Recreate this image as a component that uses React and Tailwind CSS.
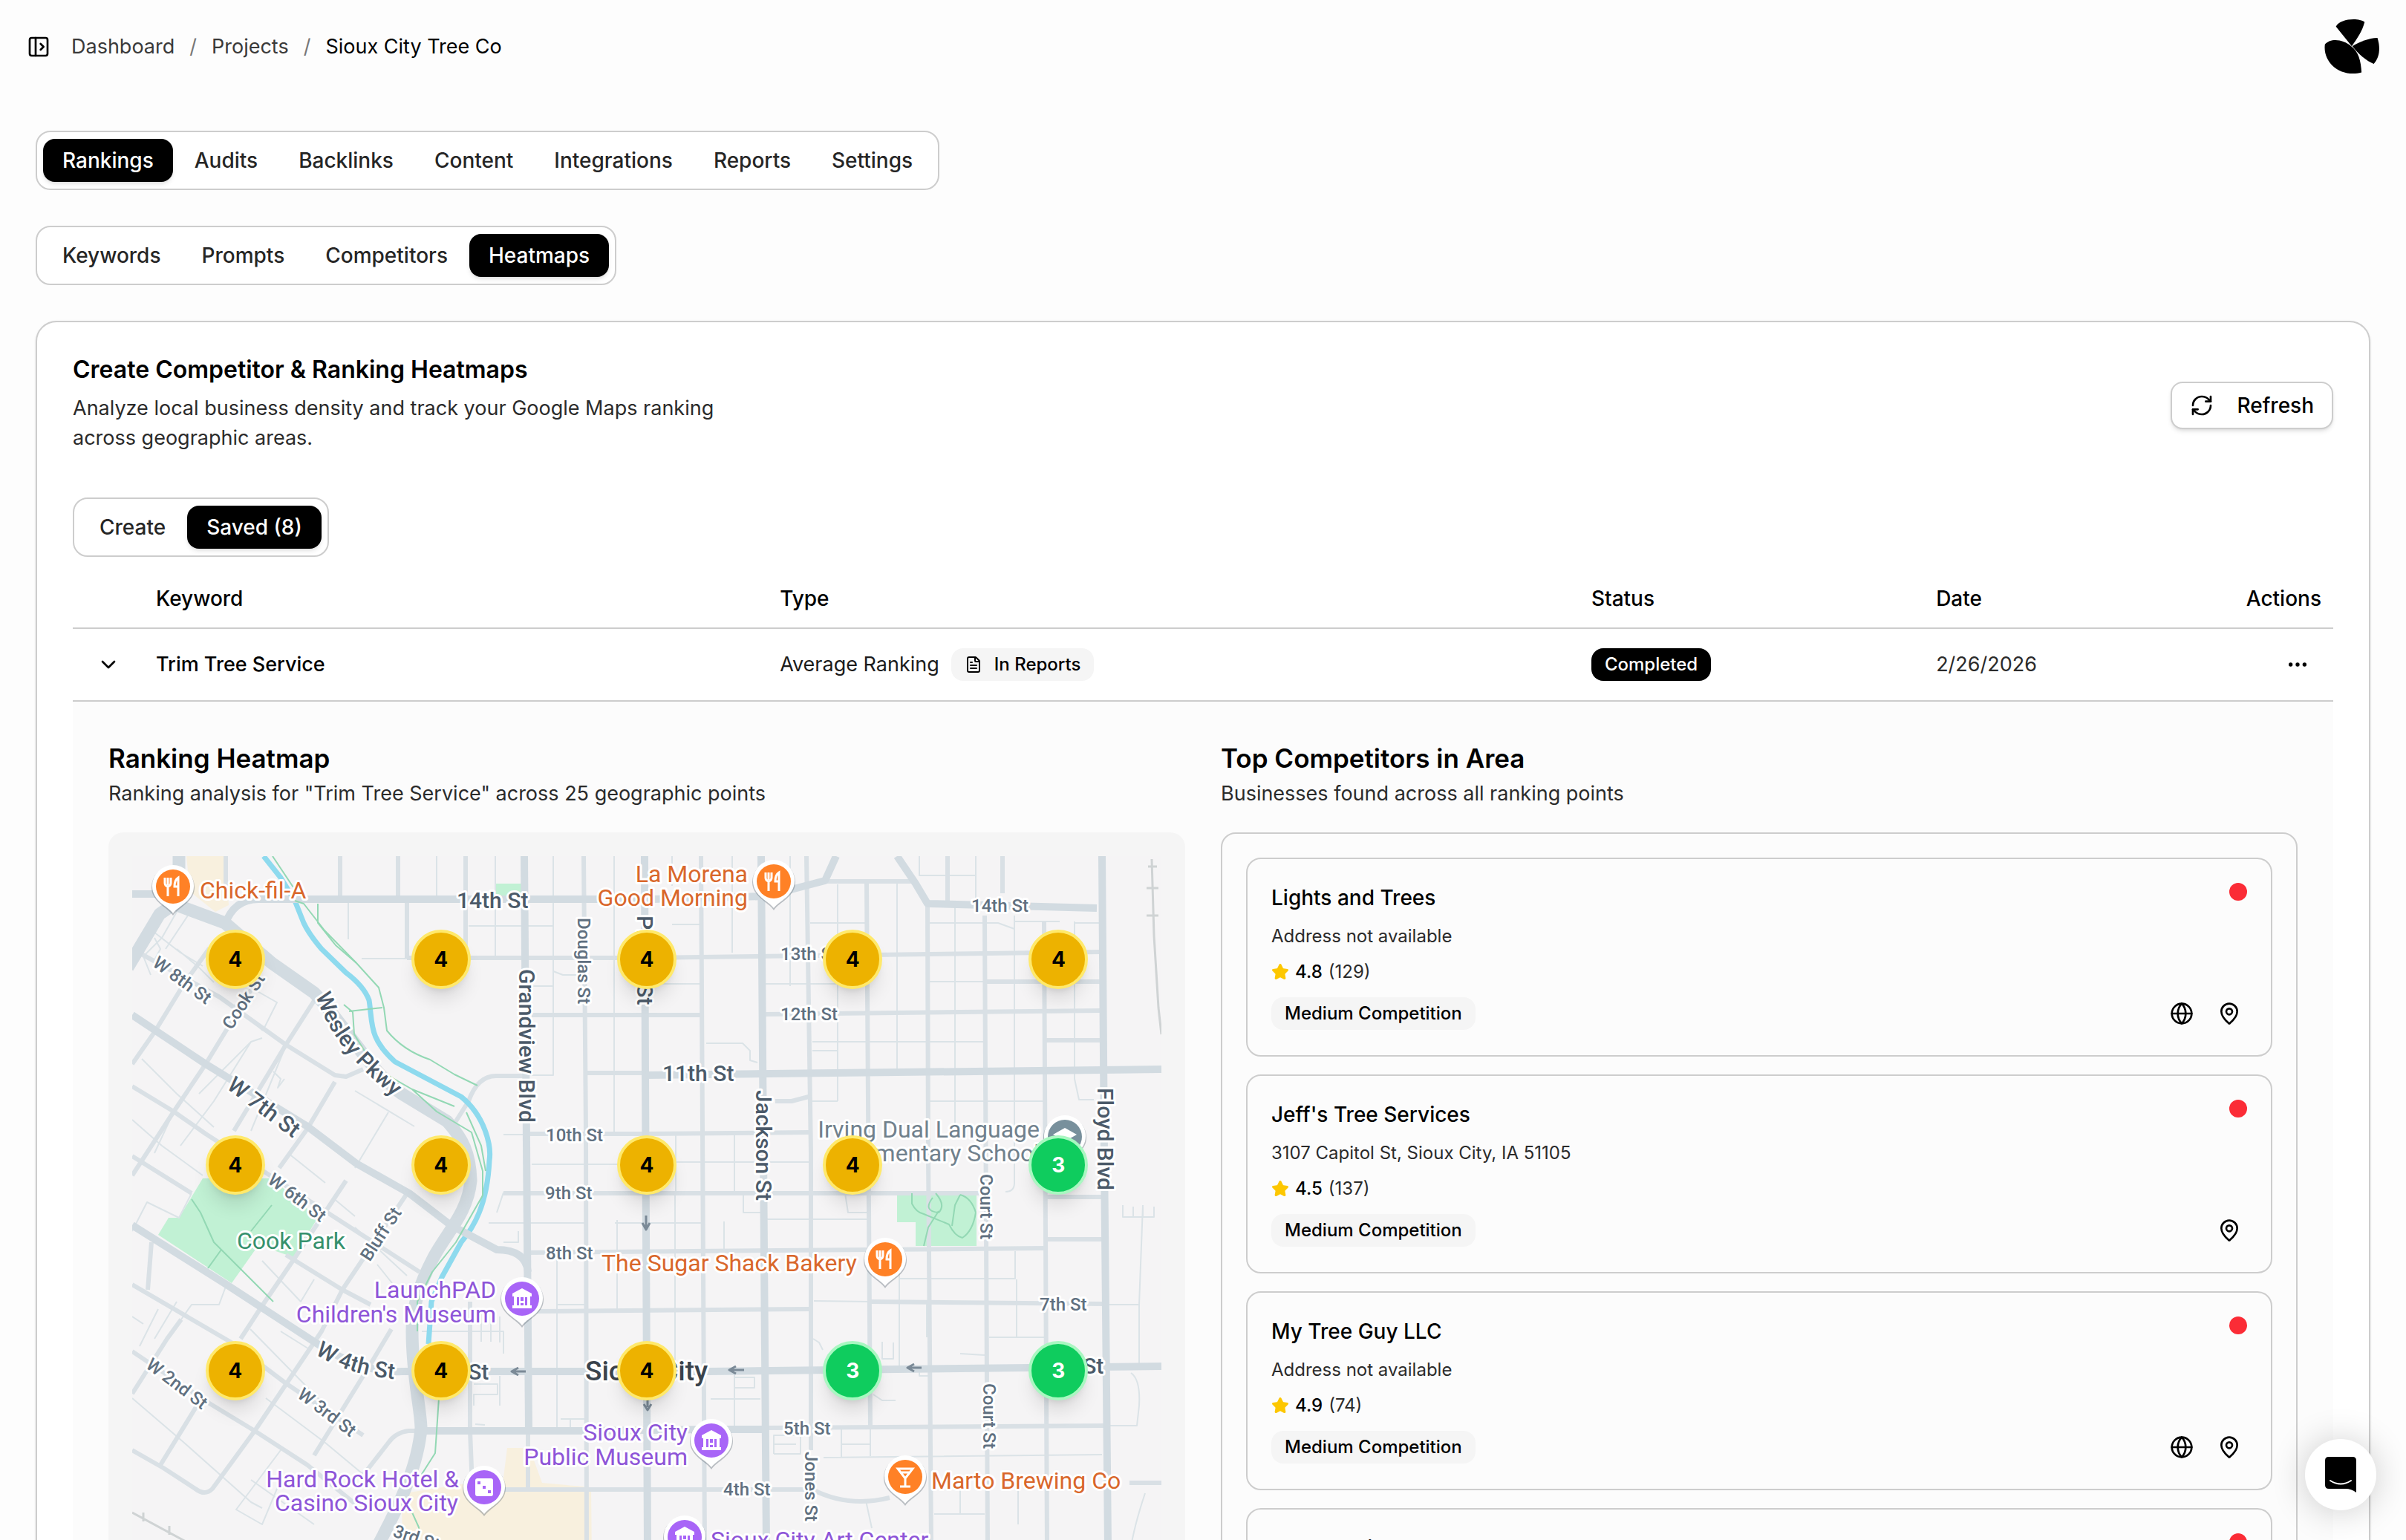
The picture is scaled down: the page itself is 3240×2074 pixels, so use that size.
import React from "react";
import {
  PanelLeftOpen,
  RefreshCw,
  ChevronDown,
  FileText,
  Ellipsis,
  Globe,
  MapPin,
  Star,
} from "lucide-react";

function TabBar({ label, items, active }) {
  return (
    <div
      role="tablist"
      aria-label={label}
      className="flex h-20 w-fit items-center gap-[3px] rounded-[20px] border-2 border-[#cdcdcd] bg-white px-2"
    >
      {items.map((item) => (
        <button
          key={item}
          type="button"
          role="tab"
          aria-selected={item === active}
          className={
            item === active
              ? "h-[58px] rounded-2xl bg-black px-[26px] text-[28px] leading-10 font-medium text-white shadow-md"
              : "h-[58px] rounded-2xl px-[26px] text-[28px] leading-10 font-medium text-[#262626]"
          }
        >
          {item}
        </button>
      ))}
    </div>
  );
}

function Logo() {
  return (
    <svg viewBox="0 0 180 180" className="size-[74px]" role="img" aria-label="Account">
      <path d="M90 88 L38 24 C50 -2 112 -6 132 9 C124 40 108 62 90 88 Z" />
      <path d="M92 88 C115 74 145 62 174 61 C184 92 182 124 162 146 C138 136 112 114 92 88 Z" />
      <path d="M88 88 C62 66 22 60 2 82 C-6 142 54 192 122 174 C120 136 112 106 88 88 Z" />
    </svg>
  );
}

const wide = [
  "M63 0V67L125 90L188 144L245 184C285 225 320 290 363 320L424 357C445 380 455 400 456 437C452 480 425 505 406 540C385 580 377 610 377 640C377 700 388 740 389 770C385 820 362 870 330 930",
  "M63 60L37 78L-6 150",
];
const major = [
  "M0 51H45",
  "M125 92C132 72 145 58 170 58H700L853 54",
  "M528 0L534 774",
  "M690 0L691 294L694 930",
  "M847 0L850 400L854 930",
  "M1306 0L1309 400L1314 930",
  "M692 295L1386 287",
  "M0 214L99 280L236 364L302 414L373 454L429 497L491 530Q530 530 533 560",
  "M0 497L127 577L245 654Q310 697 363 694H776L1386 687",
  "M389 774H612L780 772H853",
  "M853 54L933 33L948 0",
  "M1030 0L1055 37L1071 64L1299 70",
];
const medium = [
  "M126 0V60M280 0V58M358 0V58M370 58V137M449 0V137",
  "M608 0L611 374L612 930M766 0L771 930M908 0L914 400L914 800",
  "M933 34H1052M989 34L994 770M1071 64L1072 400L1076 930",
  "M1098 0V62M1148 80L1152 930M1172 0V50M1228 88L1232 930",
  "M370 137H691L1304 129",
  "M538 214H766M853 213L1304 208",
  "M611 292H691M533 374H691L911 372",
  "M434 360L453 330Q465 296 490 296H533",
  "M500 454H1140M1229 459H1309M1229 516H1309",
  "M533 534L1229 528M540 613L911 610M993 600L1309 603",
  "M853 770L1310 767M500 853H916Q965 878 1020 864M1343 844H1386",
  "M1149 169H1304M1229 248H1304M866 330L888 330L911 324",
  "M9 130L118 190L207 254L273 295L288 297L311 287",
  "M0 310L56 344L99 374L269 484L387 560",
  "M0 404L80 454M207 537L283 584L321 604",
  "M0 577L137 657L207 710L311 780",
  "M0 667L104 737L165 774L236 820L300 872",
  "M0 800L42 824L85 852Q98 862 108 852L165 774L212 704L255 640L283 584L373 450",
  "M0 430L56 344L99 280L127 234L160 180",
  "M198 420L236 367L273 304M0 280L30 237L71 170L104 124",
  "M137 370L207 254L248 190M146 650L174 607L217 544L288 437",
  "M245 807L321 684L349 637M0 724L47 650L66 624M38 820L89 737",
  "M26 520L21 584M389 774H372Q355 776 345 790L310 835",
  "M533 774V850M455 600V774L458 850",
];
const thin = [
  "M410 0V55M489 0V137M567 0V290M649 0V290M727 0V40M808 0V130M886 0V175",
  "M950 38V330M1030 35V290M1060 0V26H1135M1108 64V375M1136 0V60M1188 80V440Q1188 452 1176 452M1269 88V300L1275 328H1295",
  "M291 58V112M309 138H370M453 94H567M538 175H567M533 295H567V200",
  "M567 155L580 160H605M649 294V374M653 490V610M572 540V604H611M572 604V774",
  "M913 90H988M1070 90H1166L1188 98M1188 88H1249M727 92H766M1269 90H1304",
  "M700 172H766M853 172H989M1070 169H1149M916 250H1149M916 262H950M773 252H822L832 262V275L842 278",
  "M500 375H533M538 415H691M732 412H911M732 374V452M811 374V452M916 330H950M1070 330H1227",
  "M650 494H770M853 489H990M823 452V480H846M960 454L964 480H990M1033 569H1189V532",
  "M731 452V694M797 492V530M1033 534V694M918 599L993 600M1070 600V648M1154 648H1229M1191 570V648",
  "M1309 604H1356V686M1361 470L1356 604M1334 470V486H1376V472M1348 472V486M1361 472V486",
  "M779 731H846M811 694V770M811 702H838V716H811M1345 696Q1358 705 1356 740L1353 767H1310",
  "M931 810L1306 806M955 772V810M994 772V808M864 805V780H900V805H864M864 792H894M955 792H994",
  "M988 868L996 905M1080 886H1148M1115 850V886M1193 850V900M1364 858Q1350 900 1345 930",
  "M20 95L65 130L95 148M60 75L40 110L15 135L25 160M75 80L45 125M30 110L38 125L30 140M60 125L90 150L110 170",
  "M13 273L60 320L110 365M56 344L30 400M90 320L160 250L175 245M190 290L200 300L196 312L205 300M160 370L205 260",
  "M65 390L110 330L160 250M0 355L40 390L95 430M210 400L260 440M300 316L380 364M345 345L300 420",
  "M165 180L195 197L176 235M137 200L176 235M0 505L20 466L63 487L80 454M270 460L300 485M330 550L350 575M300 500L370 565",
  "M0 620L15 630M35 610L10 660M60 600L30 650M127 577L117 604H80L66 624M159 637L260 740M200 640L240 665",
  "M175 545L227 600L245 570M0 730L70 790L160 870L175 878M180 730L260 790L320 840M245 900L160 840M200 800L140 880L175 900L200 840",
  "M390 640H500V670M470 617V654M483 617V654M495 620V655M460 711H492V725H460V740M495 700V740M462 765L475 766",
  "M491 480L500 453M480 494H610M500 520H520V505M1075 700H1060V690M1010 654V677H1025V655M998 725L1010 733H1028",
  "M917 650L925 655L930 665M1115 670L1148 672M577 758H612M590 758V772",
];
const trails = [
  "M189 0L217 42M219 60L231 64L259 100L302 144L332 177L339 204L343 235Q365 262 401 274L434 294L465 309",
  "M250 64V90L274 120L302 144M285 200L297 210L299 240L314 264L330 287L377 314L434 337M377 314L410 344L457 372L472 424L472 457L436 520L404 560L384 600L384 640",
  "M292 209L337 204M450 345L470 390L476 424M413 730L408 804L387 837M377 884L386 904V921",
];

function PinGlyph({ kind }) {
  if (kind === "food")
    return (
      <path
        d="M-11 -12V-5Q-11 -1 -7 0V13M-7 -12V-2M-3 -12V-5Q-3 -1 -7 0M7 13V-12Q2 -9 2 0H7"
        fill="none"
        stroke="#fff"
        strokeWidth="3"
      />
    );
  if (kind === "bar")
    return (
      <path d="M-10 -11H10L0 2ZM0 2V13M-7 13H7M-5 -6H5" fill="none" stroke="#fff" strokeWidth="3" />
    );
  if (kind === "museum")
    return (
      <path
        d="M0 -14L13 -7V-3H11V9H13V13H-13V9H-11V-3H-13V-7ZM-7 -2V9H-4V-2ZM4 -2V9H7V-2ZM-2 -2V3H2V-2ZM-2 6V9H2V6Z"
        fill="#fff"
        fillRule="evenodd"
      />
    );
  if (kind === "casino")
    return (
      <g>
        <rect x="-12" y="-12" width="24" height="24" rx="3" fill="#fff" />
        <path d="M-9 -8h4v4h-4zM-2 -2h4v4h-4zM5 4h4v4h-4z" fill="#a865f7" />
      </g>
    );
  return <path d="M0 -12L16 -3L0 6L-16 -3ZM-10 3V9L0 14L10 9V3L0 9Z" fill="#fff" />;
}

function Pin({ x, y, color, kind }) {
  return (
    <g transform={`translate(${x} ${y})`}>
      <path d="M0 39C-7 28 -29 21 -29 1A29 29 0 0 1 29 1C29 21 7 28 0 39Z" fill="#5f6b76" opacity="0.4" />
      <path d="M0 36C-7 26 -28 20 -28 -1A28 28 0 0 1 28 -1C28 20 7 26 0 36Z" fill="#fff" />
      <circle r="23" fill={color} />
      <PinGlyph kind={kind} />
    </g>
  );
}

const orange = "#ff8126";
const purple = "#a865f7";
const pins = [
  [55, 41, orange, "food"],
  [864, 34, orange, "food"],
  [1014, 543, orange, "food"],
  [1041, 836, orange, "bar"],
  [525, 596, purple, "museum"],
  [780, 787, purple, "museum"],
  [744, 917, purple, "museum"],
  [474, 850, purple, "casino"],
  [1256, 378, "#78909c", "school"],
];

const places = [
  [91, 57, "start", "#d9672b", "Chick-fil-A"],
  [829, 35, "end", "#d9672b", "La Morena"],
  [829, 67, "end", "#d9672b", "Good Morning"],
  [632, 559, "start", "#d9672b", "The Sugar Shack Bakery"],
  [1076, 852, "start", "#d9672b", "Marto Brewing Co"],
  [490, 595, "end", "#8e55d8", "LaunchPAD"],
  [490, 628, "end", "#8e55d8", "Children's Museum"],
  [440, 850, "end", "#8e55d8", "Hard Rock Hotel &"],
  [439, 882, "end", "#8e55d8", "Casino Sioux City"],
  [748, 787, "end", "#8e55d8", "Sioux City"],
  [748, 820, "end", "#8e55d8", "Public Museum"],
  [779, 932, "start", "#8e55d8", "Sioux City Art Center"],
  [141, 529, "start", "#36916d", "Cook Park"],
  [1222, 379, "end", "#71818d", "Irving Dual Language"],
  [1222, 411, "end", "#71818d", "Elementary School"],
];

const bigStreets = [
  [437, 70, 0, "14th St"],
  [714, 303, 0, "11th St"],
  [521, 152, 90, "Grandview Blvd"],
  [680, 80, 90, "Pierce St"],
  [840, 315, 90, "Jackson St"],
  [1300, 312, 90, "Floyd Blvd"],
  [126, 312, 37, "W 7th St"],
  [401, 705, 0, "6th St"],
  [1229, 697, 0, "6th St"],
];
const smallStreets = [
  [1130, 75, 0, "14th St"],
  [873, 140, 0, "13th St"],
  [873, 221, 0, "12th St"],
  [557, 384, 0, "10th St"],
  [556, 462, 0, "9th St"],
  [557, 543, 0, "8th St"],
  [1222, 612, 0, "7th St"],
  [877, 779, 0, "5th St"],
  [796, 861, 0, "4th St"],
  [600, 83, 90, "Douglas St"],
  [1142, 428, 90, "Court St"],
  [1146, 710, 90, "Court St"],
  [906, 802, 90, "Jones St"],
  [26, 147, 36, "W 8th St"],
  [134, 235, -57, "Cook St"],
  [181, 439, 37, "W 6th St"],
  [320, 547, -57, "Bluff St"],
  [221, 728, 37, "W 3rd St"],
  [17, 688, 37, "W 2nd St"],
  [350, 916, 18, "3rd St"],
];

function CityMap() {
  const halo = { paintOrder: "stroke" };
  return (
    <svg
      viewBox="0 0 1386 1386"
      className="block w-full font-[Roboto,sans-serif]"
      role="img"
      aria-label="Map of Sioux City"
    >
      <rect width="1386" height="1386" fill="#f5f4f5" />
      <path d="M73 0H125L130 66L112 75L78 48Z" fill="#f8f0de" />
      <path d="M373 857L500 837L505 797H535L552 844L618 850L623 1386H382L363 884Z" fill="#f8f0de" />
      <path
        d="M95 434H188L250 487L217 540L170 524L134 575L35 510L49 487H63ZM1030 454H1137V525H1055V493H1030ZM490 37H526V55H490Z"
        fill="#c1f1d4"
      />
      <g fill="none" strokeLinejoin="round">
        <g stroke="#dbe3e7" strokeWidth="2">
          {thin.map((d) => (
            <path key={d} d={d} />
          ))}
        </g>
        <g stroke="#d9e0e5" strokeWidth="6">
          {medium.map((d) => (
            <path key={d} d={d} />
          ))}
        </g>
        <path
          d="M177 0L200 29L219 60L231 90Q238 105 255 125L288 157Q312 175 319 194C324 225 318 245 354 277L443 324C475 350 484 390 481 410C478 470 460 500 443 520L417 567L403 600L399 657"
          stroke="#8edaee"
          strokeWidth="7"
        />
        <g stroke="#d2dbe1" strokeWidth="10">
          {major.map((d) => (
            <path key={d} d={d} />
          ))}
        </g>
        <g stroke="#d2dbe1" strokeWidth="17">
          {wide.map((d) => (
            <path key={d} d={d} />
          ))}
        </g>
        <g stroke="#93d8b4" strokeWidth="2">
          {trails.map((d) => (
            <path key={d} d={d} />
          ))}
        </g>
        <path
          d="M80 462L92 480L110 520L120 530L170 580L190 600M188 470L160 505M120 530L102 555M1050 454V468Q1056 480 1066 482L1100 496Q1108 512 1118 514Q1132 505 1136 480M1082 454Q1096 470 1086 480Q1064 478 1078 460M1066 525L1072 500L1086 478M1115 456L1108 470L1104 498M1115 456Q1130 460 1136 480"
          stroke="#93d8b4"
          strokeWidth="2"
        />
        <path d="M1373 4L1376 107L1382 204L1386 240M1368 14h12M1366 43h16M1366 80h16M0 884L85 930M15 884v12M50 902v12" stroke="#cfd3d4" strokeWidth="3" />
        <path
          d="M692 484V500M687 494L692 503L697 494M824 692H806M813 687L804 692L813 697M1063 689H1046M1053 684L1044 689L1053 694M530 694H513M520 689L511 694L520 699M694 730V742M689 738L694 746L699 738"
          stroke="#7b8a97"
          strokeWidth="3"
        />
      </g>
      <g stroke="#fff" strokeWidth="6" strokeLinejoin="round">
        <g fontSize="24" fontWeight="500" fill="#607080" style={halo}>
          {smallStreets.map(([x, y, r, t]) => (
            <text key={`${x}-${y}`} transform={`translate(${x} ${y}) rotate(${r})`}>
              {t}
            </text>
          ))}
        </g>
        <g fontSize="30" fontWeight="500" fill="#4b5a69" style={halo}>
          {bigStreets.map(([x, y, r, t]) => (
            <text key={`${x}-${y}`} transform={`translate(${x} ${y}) rotate(${r})`}>
              {t}
            </text>
          ))}
          <path id="wesley" d="M247 188C265 240 298 285 380 345" fill="none" stroke="none" />
          <text>
            <textPath href="#wesley">Wesley Pkwy</textPath>
          </text>
          <path id="west4" d="M246 670Q300 706 390 706" fill="none" stroke="none" />
          <text>
            <textPath href="#west4">W 4th St</textPath>
          </text>
        </g>
        <text x="610" y="706" fontSize="37" fontWeight="500" fill="#3a434c" style={halo}>
          Sioux City
        </text>
      </g>
      {pins.map(([x, y, color, kind]) => (
        <Pin key={`${x}-${y}`} x={x} y={y} color={color} kind={kind} />
      ))}
      <g fontSize="32" stroke="#fff" strokeWidth="6" strokeLinejoin="round" style={halo}>
        {places.map(([x, y, anchor, fill, t]) => (
          <text key={t} x={x} y={y} textAnchor={anchor} fill={fill}>
            {t}
          </text>
        ))}
      </g>
    </svg>
  );
}

const ranks = [
  [4, 4, 4, 4, 4],
  [4, 4, 4, 4, 3],
  [4, 4, 4, 3, 3],
  [4, 4, 4, 3, 3],
  [4, 4, 3, 3, 3],
];

function RankGrid() {
  return (
    <div className="absolute inset-0 grid grid-cols-5 grid-rows-5">
      {ranks.flat().map((rank, i) => (
        <div key={i} className="flex items-center justify-center">
          <button
            type="button"
            aria-label={`Point ${i + 1}, rank ${rank}`}
            className={
              rank === 4
                ? "size-20 rounded-full border-4 border-[#ffe96b] bg-[#edb200] text-[28px] font-bold text-black shadow-xl"
                : "size-20 rounded-full border-4 border-[#a9f7c1] bg-[#0fcc5e] text-[28px] font-bold text-white shadow-xl"
            }
          >
            {rank}
          </button>
        </div>
      ))}
    </div>
  );
}

const competitors = [
  { name: "Lights and Trees", address: "Address not available", rating: "4.8", reviews: 129, site: true },
  { name: "Jeff's Tree Services", address: "3107 Capitol St, Sioux City, IA 51105", rating: "4.5", reviews: 137, site: false },
  { name: "My Tree Guy LLC", address: "Address not available", rating: "4.9", reviews: 74, site: true },
  { name: "Tree Services", address: "Address not available", rating: "4.7", reviews: 52, site: true },
];

function CompetitorCard({ name, address, rating, reviews, site }) {
  return (
    <li className="flex flex-col gap-4 rounded-[20px] border-2 border-[#cdcdcd] p-8">
      <div className="flex items-start justify-between">
        <h4 className="text-[28px] leading-10 font-medium text-black">{name}</h4>
        <span className="size-6 rounded-full bg-[#fb2c36]" />
      </div>
      <p className="text-2xl leading-8 text-[#2b2b2b]">{address}</p>
      <div className="flex items-center gap-2 text-2xl leading-8">
        <Star className="size-6 fill-[#fdc700] text-[#fdc700]" />
        <span className="font-medium text-black">{rating}</span>
        <span className="text-[#2b2b2b]">({reviews})</span>
      </div>
      <div className="flex h-12 items-center justify-between">
        <span className="rounded-2xl bg-[#f5f5f5] px-[18px] py-1 text-2xl leading-9 font-medium text-black">
          Medium Competition
        </span>
        <div className="flex gap-4">
          {site && (
            <a href="#website" aria-label="Website" className="flex size-12 items-center justify-center">
              <Globe className="size-8" />
            </a>
          )}
          <a href="#map" aria-label="Open in maps" className="flex size-12 items-center justify-center">
            <MapPin className="size-8" />
          </a>
        </div>
      </div>
    </li>
  );
}

export default function App() {
  return (
    <div className="relative h-screen overflow-hidden bg-[#fdfdfd] font-[Inter,sans-serif] text-black">
      <header className="flex h-[126px] items-center justify-between px-9">
        <div className="flex items-center gap-7">
          <button type="button" aria-label="Toggle sidebar">
            <PanelLeftOpen className="size-8" />
          </button>
          <nav aria-label="Breadcrumb" className="flex items-center gap-5 text-[27px] leading-10 text-[#3a3a3a]">
            <a href="#dashboard">Dashboard</a>
            <span className="text-[#777777]">/</span>
            <a href="#projects">Projects</a>
            <span className="text-[#777777]">/</span>
            <span className="text-black">Sioux City Tree Co</span>
          </nav>
        </div>
        <Logo />
      </header>

      <main className="flex flex-col gap-12 px-12 pt-[50px]">
        <TabBar
          label="Project sections"
          items={["Rankings", "Audits", "Backlinks", "Content", "Integrations", "Reports", "Settings"]}
          active="Rankings"
        />
        <TabBar
          label="Ranking sections"
          items={["Keywords", "Prompts", "Competitors", "Heatmaps"]}
          active="Heatmaps"
        />

        <section className="rounded-[28px] border-2 border-[#cdcdcd] bg-white p-12 shadow-sm">
          <div className="flex items-center justify-between">
            <div className="flex max-w-[896px] flex-col gap-4">
              <h2 className="text-[32px] leading-8 font-semibold">Create Competitor &amp; Ranking Heatmaps</h2>
              <p className="text-[27px] leading-10 text-[#2b2b2b]">
                Analyze local business density and track your Google Maps ranking across geographic areas.
              </p>
            </div>
            <button
              type="button"
              className="flex h-16 items-center gap-8 rounded-2xl border-2 border-[#cdcdcd] bg-white px-6 text-[28px] leading-10 font-medium shadow-md"
            >
              <RefreshCw className="size-8" />
              Refresh
            </button>
          </div>

          <div className="mt-[60px] mb-4">
            <TabBar label="Heatmap views" items={["Create", "Saved (8)"]} active="Saved (8)" />
          </div>

          <table className="w-full table-fixed border-collapse text-left text-[27px] leading-10">
            <thead>
              <tr className="h-20 border-b-2 border-[#cdcdcd] text-[28px]">
                <th className="w-24" aria-label="Expand" />
                <th className="w-[27.6%] px-4 font-medium">Keyword</th>
                <th className="w-[35.9%] px-4 font-medium">Type</th>
                <th className="w-[15.25%] px-4 font-medium">Status</th>
                <th className="px-4 font-medium">Date</th>
                <th className="w-40 px-4 text-right font-medium">Actions</th>
              </tr>
            </thead>
            <tbody>
              <tr className="h-[98px] border-b-2 border-[#cdcdcd]">
                <td>
                  <button type="button" aria-label="Collapse row" className="flex h-16 w-24 items-center justify-center">
                    <ChevronDown className="size-8" />
                  </button>
                </td>
                <td className="px-4 font-medium">Trim Tree Service</td>
                <td className="px-4">
                  <div className="flex items-center gap-4">
                    <span className="text-[#1c1c1c]">Average Ranking</span>
                    <span className="flex h-11 items-center gap-4 rounded-2xl bg-[#f5f5f5] px-[18px] text-2xl font-medium">
                      <FileText className="size-6" />
                      In Reports
                    </span>
                  </div>
                </td>
                <td className="px-4">
                  <span className="flex h-11 w-fit items-center rounded-2xl bg-black px-[18px] text-2xl font-medium text-white">
                    Completed
                  </span>
                </td>
                <td className="px-4 text-[#2b2b2b]">2/26/2026</td>
                <td className="px-4">
                  <button type="button" aria-label="Row actions" className="ml-auto flex size-16 items-center justify-center">
                    <Ellipsis className="size-8" />
                  </button>
                </td>
              </tr>
              <tr>
                <td colSpan={6} className="bg-[#fcfcfc] p-12 align-top">
                  <div className="grid grid-cols-2 items-start gap-12">
                    <div>
                      <h3 className="text-[35px] leading-[56px] font-semibold">Ranking Heatmap</h3>
                      <p className="text-[#2b2b2b]">
                        Ranking analysis for &quot;Trim Tree Service&quot; across 25 geographic points
                      </p>
                      <div className="mt-8 rounded-[20px] bg-[#f5f5f5] p-8">
                        <div className="relative">
                          <CityMap />
                          <RankGrid />
                        </div>
                      </div>
                    </div>
                    <div>
                      <h3 className="text-[35px] leading-[56px] font-semibold">Top Competitors in Area</h3>
                      <p className="text-[#2b2b2b]">Businesses found across all ranking points</p>
                      <ul className="mt-8 flex flex-col gap-6 rounded-[20px] border-2 border-[#cdcdcd] p-8">
                        {competitors.map((c) => (
                          <CompetitorCard key={c.name} {...c} />
                        ))}
                      </ul>
                    </div>
                  </div>
                </td>
              </tr>
            </tbody>
          </table>
        </section>
      </main>

      <button
        type="button"
        aria-label="Open chat"
        className="fixed right-10 bottom-10 flex size-24 items-center justify-center rounded-full bg-white shadow-[0_2px_48px_rgba(0,0,0,0.2)]"
      >
        <svg viewBox="0 0 42 48" className="h-12 w-[42px]">
          <path d="M5 0H37Q42 0 42 5V48Q35 43 28 43H5Q0 43 0 38V5Q0 0 5 0Z" fill="#000" />
          <path d="M7 32Q21 41 35 32" fill="none" stroke="#fff" strokeWidth="2" strokeLinecap="round" />
        </svg>
      </button>
    </div>
  );
}
